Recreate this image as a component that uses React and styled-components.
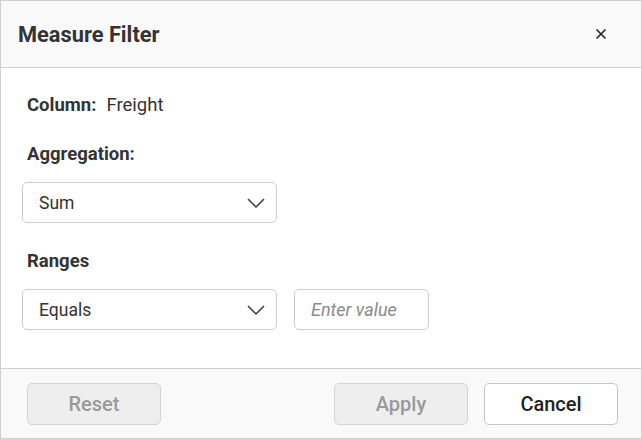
import styled, { createGlobalStyle } from "styled-components";

const GlobalStyle = createGlobalStyle`
  html, body {
    margin: 0;
    padding: 0;
    background: #fff;
  }
  * {
    box-sizing: border-box;
  }
`;

function Chevron() {
  return (
    <svg width="18" height="10" viewBox="0 0 18 10" fill="none">
      <path d="M1 1 L9 9 L17 1" stroke="#3a3a3a" strokeWidth="1.5" />
    </svg>
  );
}

function CloseIcon() {
  return (
    <svg width="12" height="12" viewBox="0 0 12 12" fill="none">
      <path d="M1.5 1.5 L10.5 10.5 M10.5 1.5 L1.5 10.5" stroke="#222" strokeWidth="1.6" />
    </svg>
  );
}

export default function App() {
  return (
    <>
      <GlobalStyle />
      <Dialog>
        {/* 헤더 */}
        <Header>
          <Title>Measure Filter</Title>
          <CloseButton aria-label="close">
            <CloseIcon />
          </CloseButton>
        </Header>

        {/* 본문 */}
        <Body>
          <ColumnRow>
            <Label>Column:</Label>
            <Value>Freight</Value>
          </ColumnRow>

          <Label>Aggregation:</Label>
          <Field>
            <Select>
              <span>Sum</span>
              <Chevron />
            </Select>
          </Field>

          <Label $top={28}>Ranges</Label>
          <Field>
            <Select>
              <span>Equals</span>
              <Chevron />
            </Select>
            <Input placeholder="Enter value" />
          </Field>
        </Body>

        {/* 푸터 */}
        <Footer>
          <Button disabled>Reset</Button>
          <Spacer />
          <Button disabled>Apply</Button>
          <Button>Cancel</Button>
        </Footer>
      </Dialog>
    </>
  );
}

// Styled Components
const Dialog = styled.div`
  width: 642px;
  height: 439px;
  border: 1px solid #cfcfcf;
  display: flex;
  flex-direction: column;
  font-family: Roboto, "Liberation Sans", sans-serif;
  color: #333;
  background: #fff;
`;

const Header = styled.div`
  height: 67px;
  flex-shrink: 0;
  display: flex;
  align-items: center;
  justify-content: space-between;
  padding: 0 34px 0 17px;
  background: #f9f9f9;
  border-bottom: 1px solid #cfcfcf;
`;

const Title = styled.div`
  font-size: 21.8px;
  font-weight: 700;
  color: #333;
  margin-top: 1px;
`;

const CloseButton = styled.div`
  width: 12px;
  height: 12px;
  display: flex;
`;

const Body = styled.div`
  flex: 1;
  display: flex;
  flex-direction: column;
  align-items: flex-start;
  padding: 26px 22px 0 21px;
`;

const ColumnRow = styled.div`
  display: flex;
  align-items: baseline;
  gap: 10px;
  margin-bottom: 28px;
`;

const Label = styled.div`
  font-size: 18.5px;
  font-weight: 700;
  color: #333;
  padding-left: 5px;
  margin-top: ${(props) => props.$top || 0}px;
  line-height: 20px;
`;

const Value = styled.div`
  font-size: 18.5px;
  font-weight: 400;
  color: #333;
`;

const Field = styled.div`
  display: flex;
  gap: 17px;
  margin-top: 18px;
`;

const Select = styled.div`
  width: 255px;
  height: 41px;
  border: 1px solid #cccccc;
  border-radius: 5px;
  background: #fff;
  display: flex;
  align-items: center;
  justify-content: space-between;
  padding: 0 11px 0 16px;
  font-size: 17.5px;
  color: #333;
`;

const Input = styled.input`
  width: 135px;
  height: 41px;
  border: 1px solid #cccccc;
  border-radius: 5px;
  padding: 0 16px;
  font-family: Roboto, "Liberation Sans", sans-serif;
  font-size: 18px;
  color: #333;
  outline: none;

  &::placeholder {
    color: #8a8a8a;
    font-style: italic;
  }
`;

const Footer = styled.div`
  height: 70px;
  flex-shrink: 0;
  display: flex;
  align-items: center;
  gap: 16px;
  padding: 1px 23px 0 26px;
  background: #f9f9f9;
  border-top: 1px solid #cfcfcf;
`;

const Spacer = styled.div`
  flex: 1;
`;

const Button = styled.button`
  width: 134px;
  height: 42px;
  border-radius: 5px;
  border: 1px solid ${(props) => (props.disabled ? "#d4d4d4" : "#c4c4c4")};
  background: ${(props) => (props.disabled ? "#eeeeee" : "#fff")};
  color: ${(props) => (props.disabled ? "#999" : "#222")};
  font-family: Roboto, "Liberation Sans", sans-serif;
  font-size: 20px;
  font-weight: 500;
  cursor: pointer;
`;
